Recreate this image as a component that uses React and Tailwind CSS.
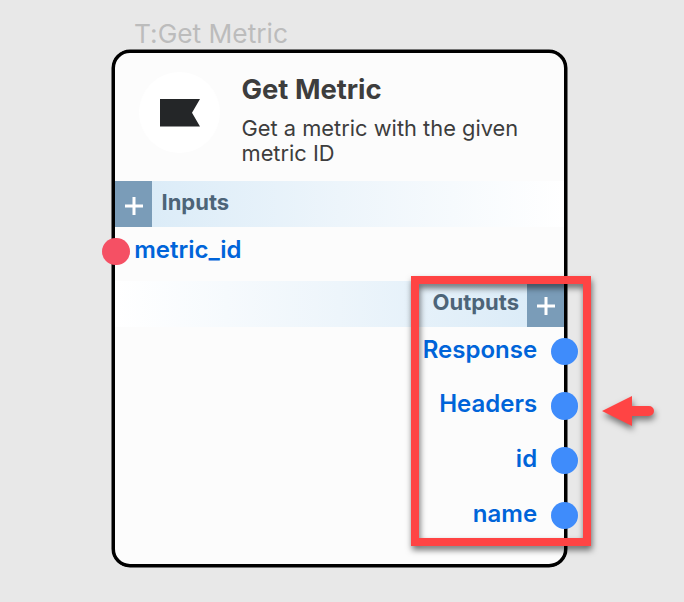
const outputs = ["Response", "Headers", "id", "name"];

function PlusButton() {
  return (
    <button className="flex h-[46px] w-[37px] shrink-0 items-center justify-center bg-[#7a9cb8] pt-[3px]">
      <svg width="18" height="18" viewBox="0 0 18 18" stroke="#fff" strokeWidth="3">
        <path d="M9 0V18M0 9H18" />
      </svg>
    </button>
  );
}

function NodeHeader() {
  return (
    <header className="flex h-32 pl-6 pt-[19px]">
      <div className="flex size-[81px] shrink-0 items-center justify-center rounded-full bg-white">
        <svg width="40" height="28" viewBox="0 0 40 28">
          <path d="M0 0H40L32 13.7L40 27.5H0Z" fill="#242628" />
        </svg>
      </div>
      <div className="ml-[21.5px] text-[#3d3d3d]">
        <h1 className="whitespace-nowrap text-[27.4px] font-bold leading-[34px]">Get Metric</h1>
        <p className="mt-[10px] whitespace-nowrap text-[21.85px] leading-[25px]">
          Get a metric with the given
          <br />
          metric ID
        </p>
      </div>
    </header>
  );
}

function FlowNode() {
  return (
    <section className="h-[517px] w-[455px] rounded-[18px] border-[3px] border-black bg-[#fcfcfc] shadow-[0_0_0_0.5px_#000]">
      <NodeHeader />
      <div className="flex h-[46px] bg-linear-to-r from-[#d8eaf7] via-[#edf5fb] to-white">
        <PlusButton />
        <span className="ml-[9.5px] text-[22px] font-bold leading-[42px] text-[#4d6478]">Inputs</span>
      </div>
      <div className="flex h-[54px] pt-[10.5px]">
        <span className="-ml-[12.7px] size-[27.4px] shrink-0 rounded-full bg-[#f55064]" />
        <span className="ml-[4.5px] text-[24px] font-semibold leading-[24px] text-[#0064d9]">metric_id</span>
      </div>
      <div className="flex h-[46px] justify-end bg-linear-to-l from-[#d8eaf7] via-[#edf5fb] to-white">
        <span className="mr-[8px] text-[22px] font-bold leading-[42px] text-[#4d6478]">Outputs</span>
        <PlusButton />
      </div>
      {outputs.map((name) => (
        <div key={name} className="flex h-[54.67px] justify-end pt-[10.6px]">
          <span className="mr-[13.5px] text-[24px] font-semibold leading-[24px] text-[#0064d9]">{name}</span>
          <span className="-mr-[14px] size-[27.4px] shrink-0 rounded-full bg-[#3f8cfb]" />
        </div>
      ))}
    </section>
  );
}

export default function App() {
  return (
    <main className="relative h-[602px] w-[684px] overflow-hidden bg-[#e8e8e8] pl-28 font-['Inter',sans-serif] [font-feature-settings:'calt'_0]">
      <div className="h-[50px] whitespace-nowrap pl-[22px] pt-[18px] text-[26.3px] leading-[32px] text-[#bcbcbc]">
        T:Get Metric
      </div>
      <FlowNode />
      <div className="absolute left-[411px] top-[276px] h-[270px] w-[180px] border-8 border-[#ff4444] drop-shadow-[1px_4px_3px_rgba(0,0,0,0.55)]" />
      <svg
        className="absolute left-[602px] top-[395px] overflow-visible drop-shadow-[1px_4px_3px_rgba(0,0,0,0.5)]"
        width="53"
        height="32"
        viewBox="0 0 53 32"
      >
        <path d="M0 16L30 1V11H47A5 5 0 0 1 47 21H30V31Z" fill="#ff4444" />
      </svg>
    </main>
  );
}
